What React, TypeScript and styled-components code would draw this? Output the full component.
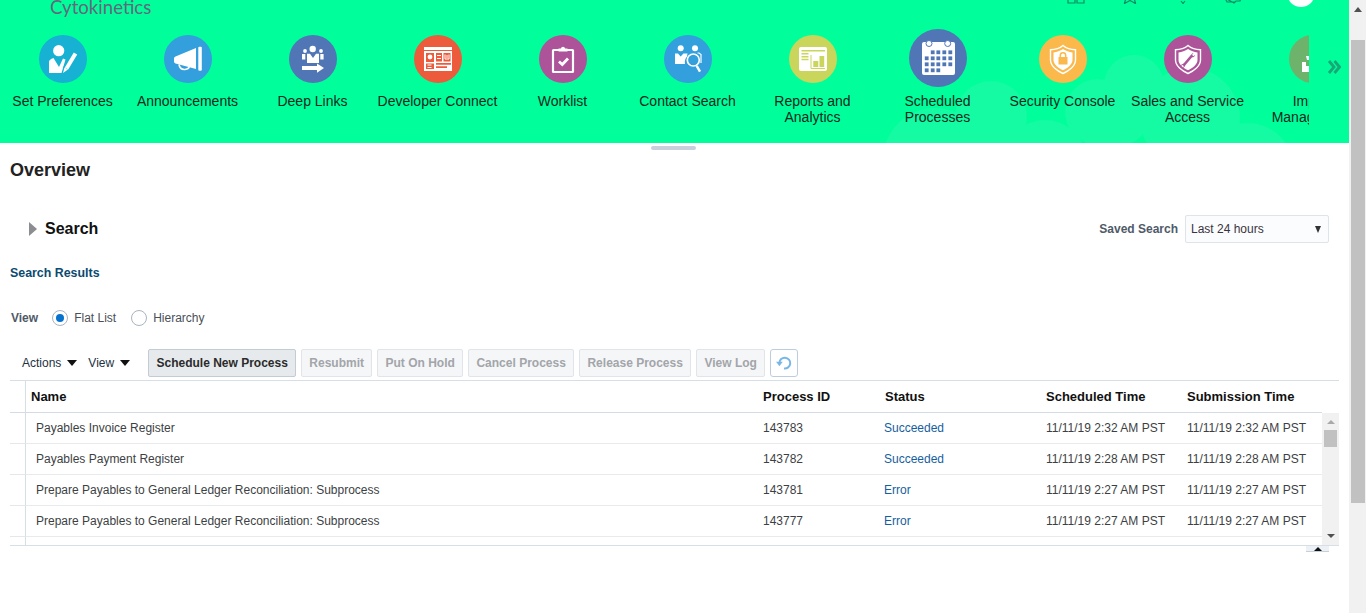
import React from "react";
import styled, { createGlobalStyle } from "styled-components";

const Global = createGlobalStyle`
  html, body { margin: 0; padding: 0; height: 100%; overflow: hidden; background: #fff; }
  body { font-family: "Liberation Sans", Arial, sans-serif; font-size: 12px; color: #333; }
  * { box-sizing: border-box; }
`;

const Page = styled.div`display: flex; width: 1366px; height: 613px; overflow: hidden;`;
const Main = styled.main`flex: 1; min-width: 0; display: flex; flex-direction: column;`;

const PageScroll = styled.aside`
  width: 17px; background: #f1f1f1; display: flex; flex-direction: column; align-items: center;
`;
const PageArrow = styled.div`
  width: 0; height: 0; margin-top: 7px; border-left: 4px solid transparent; border-right: 4px solid transparent;
  border-bottom: 5px solid #505050;
`;
const PageThumb = styled.div`width: 14px; height: 463px; margin-top: 28px; background: #c1c1c1;`;

const Header = styled.header`
  position: relative; height: 143px; background: #00ff9b; overflow: hidden; flex: none;
`;
const Clouds = styled.svg`position: absolute; left: 0; top: 0; width: 1349px; height: 143px;`;
const TopBar = styled.div`
  position: relative; height: 29px; display: flex; align-items: flex-start;
`;
const Logo = styled.div`
  margin: -5px 0 0 50px; font-family: Lato, sans-serif; font-size: 18.6px; line-height: 24px; color: #62697c;
`;
const TopTools = styled.div`
  margin: -14px 34px 0 auto; display: flex; align-items: flex-end;
`;
const ToolIcon = styled.svg<{ $gap: number }>`
  display: block; margin: 0 0 3px ${(p) => p.$gap}px; width: 18px; height: 18px;
  fill: none; stroke: #0f8a64; stroke-width: 1.2;
`;
const Avatar = styled.div`width: 28px; height: 21px; margin-left: 45px; border-radius: 0 0 14px 14px; background: #fff;`;

const NavRow = styled.div`position: relative; display: flex; align-items: flex-start;`;
const Carousel = styled.nav`display: flex; width: 1309px; overflow: hidden; flex: none;`;
const NavItem = styled.div`
  flex: 0 0 125px; display: flex; flex-direction: column; align-items: center;
`;
const IconSlot = styled.div`height: 58px; display: flex; align-items: center; justify-content: center;`;
const Circle = styled.svg<{ $size: number; $color: string }>`
  display: block; width: ${(p) => p.$size}px; height: ${(p) => p.$size}px; border-radius: 50%;
  margin-top: ${(p) => (p.$size === 48 ? 2 : 0)}px;
  background: ${(p) => p.$color}; flex: none;
`;
const NavLabel = styled.div`
  margin-top: 6px; width: 125px; text-align: center; font-size: 14px; line-height: 16px; color: #0c2a20;
`;
const LabelLine = styled.span`display: block; white-space: nowrap;`;
const More = styled.svg`
  display: block; width: 14px; height: 14px; margin: 31px 0 0 18px; fill: none; stroke: #17a877; stroke-width: 2.8;
`;

const Content = styled.div`flex: 1; padding: 0 10px; display: flex; flex-direction: column;`;
const Handle = styled.div`width: 45px; height: 4px; margin: 3px 0 0 641px; border-radius: 2px; background: #c9cfdd; flex: none;`;
const Title = styled.h1`margin: 10px 0 0; font-size: 18px; line-height: 20px; font-weight: 700; color: #222;`;
const SearchBar = styled.div`
  margin-top: 35px; height: 28px; padding: 0 10px 0 19px; display: flex; align-items: center;
`;
const Disclosure = styled.div`
  width: 0; height: 0; border-top: 7px solid transparent; border-bottom: 7px solid transparent;
  border-left: 8px solid #8b8d90;
`;
const SearchTitle = styled.h2`margin: 0 0 0 8px; font-size: 16px; font-weight: 700; color: #111;`;
const SavedLabel = styled.label`margin-left: auto; font-weight: 700; color: #4f5a68;`;
const SelectBox = styled.div`
  width: 144px; height: 28px; margin-left: 7px; padding: 0 6px 0 5px; display: flex; align-items: center;
  justify-content: space-between; border: 1px solid #dfe3ea; border-radius: 2px; background: #fbfcfe; color: #3a3340;
`;
const SelectArrow = styled.span`
  width: 0; height: 0; margin-right: 1px; border-left: 3.5px solid transparent; border-right: 3.5px solid transparent;
  border-top: 7px solid #333;
`;
const ResultsTitle = styled.h3`margin: 21px 0 0; font-size: 12.4px; line-height: 18px; font-weight: 700; color: #0b4a70;`;
const ViewRow = styled.div`margin-top: 27px; height: 18px; padding-left: 1px; display: flex; align-items: center;`;
const ViewLabel = styled.span`font-weight: 700; color: #4f5a68; margin-right: 14px;`;
const Radio = styled.span<{ $on?: boolean }>`
  width: 16px; height: 16px; border-radius: 50%; border: 1px solid #a9b4bf; background: #fff; flex: none;
  display: flex; align-items: center; justify-content: center;
  &::after { content: ""; width: 8px; height: 8px; border-radius: 50%; background: ${(p) => (p.$on ? "#0572ce" : "transparent")}; }
`;
const RadioText = styled.span`margin: 0 15px 0 6px; color: #4a4f58;`;

const Toolbar = styled.div`margin-top: 22px; height: 28px; padding-left: 12px; display: flex; align-items: center;`;
const MenuLabel = styled.span<{ $gap: number }>`
  color: #23313f; margin-right: ${(p) => p.$gap}px; display: flex; align-items: center;
`;
const Caret = styled.i`
  display: block; margin-left: 6px; width: 0; height: 0; border-left: 5px solid transparent; border-right: 5px solid transparent;
  border-top: 6px solid #111;
`;
const ToolButton = styled.button<{ $width: number; $primary?: boolean }>`
  width: ${(p) => p.$width}px; height: 28px; margin-right: 5px; padding: 0;
  font: 700 12px "Liberation Sans", Arial, sans-serif; border-radius: 2px;
  border: 1px solid ${(p) => (p.$primary ? "#c3ccd4" : "#e1e4e9")};
  background: ${(p) => (p.$primary ? "#e6eaed" : "#f5f6f8")};
  color: ${(p) => (p.$primary ? "#2b2b2b" : "#a2a5a9")};
`;
const RefreshButton = styled.button`
  width: 28px; height: 28px; padding: 0; display: flex; align-items: center; justify-content: center;
  border: 1px solid #bccde0; border-radius: 3px; background: #fff;
`;
const RefreshGlyph = styled.svg`width: 20px; height: 20px; fill: none; stroke: #78b6e6; stroke-width: 2.4;`;

const Table = styled.section`margin-top: 3px; border-top: 1px solid #d6dfe6; border-bottom: 1px solid #d6dfe6; height: 166px; display: flex; flex-direction: column; overflow: hidden;`;
const cols = "16px 731px 122px 161px 141px 141px 17px";
const HeadRow = styled.div`
  display: grid; grid-template-columns: ${cols}; height: 32px; flex: none; align-items: center;
`;
const HeadCell = styled.div<{ $pad: number }>`
  height: 100%; display: flex; align-items: center; padding-left: ${(p) => p.$pad}px;
  font-size: 13px; font-weight: 700; color: #111; border-bottom: 1px solid #d3dce4;
`;
const Gutter = styled.div<{ $head?: boolean }>`
  height: 100%; border-right: 1px solid #d6dfe6; border-bottom: 1px solid ${(p) => (p.$head ? "#d3dce4" : "#e4e8ec")};
`;
const Corner = styled.div`height: 100%;`;
const TableBody = styled.div`flex: 1; display: flex; min-height: 0;`;
const Rows = styled.div`width: 1312px; flex: none; overflow: hidden;`;
const Row = styled.div`
  display: grid; grid-template-columns: 16px 731px 122px 161px 141px 141px; height: 31px; align-items: center;
`;
const Cell = styled.div<{ $pad: number; $link?: boolean }>`
  height: 100%; display: flex; align-items: center; padding-left: ${(p) => p.$pad}px; white-space: nowrap;
  color: ${(p) => (p.$link ? "#165e9e" : "#3d3f44")}; border-bottom: 1px solid #e8ebee;
`;
const InnerScroll = styled.div`
  width: 17px; background: #f1f1f1; display: flex; flex-direction: column; align-items: center;
`;
const ArrowUp = styled.div`
  width: 0; height: 0; margin-top: 7px; border-left: 4px solid transparent; border-right: 4px solid transparent;
  border-bottom: 4px solid #a9a9a9;
`;
const InnerThumb = styled.div`width: 13px; height: 17px; margin-top: 6px; background: #c1c1c1;`;
const ArrowDown = styled.div`
  width: 0; height: 0; margin-top: auto; margin-bottom: 7px; border-left: 4px solid transparent; border-right: 4px solid transparent;
  border-top: 4px solid #505050;
`;
const ExpandRow = styled.div`display: flex; justify-content: flex-end; padding-right: 10px;`;
const ExpandTab = styled.div`
  width: 23px; height: 6px; background: #edf1f5; border-bottom: 1px solid #c5d0da; display: flex; justify-content: center; padding-top: 1px;
`;
const ExpandCaret = styled.i`
  display: block; width: 0; height: 0; border-left: 4px solid transparent; border-right: 4px solid transparent; border-bottom: 4px solid #111;
`;

const W = "#fff";
const colors = {
  pref: "#17b1d3", blue: "#339fdd", indigo: "#5176b6", red: "#ec5c3c", purple: "#ad5399",
  olive: "#c9d55b", amber: "#fbb84b", green: "#6eb36c",
};

const Shield: React.FC<{ children: React.ReactNode }> = ({ children }) => (
  <>
    <path d="M24 10.5C20.5 13.5 16 14.7 11.5 14.7V25C11.5 31 18 36 24 38.5 30 36 36.5 31 36.5 25V14.7C32 14.7 27.5 13.5 24 10.5Z" fill="none" stroke={W} strokeWidth="1.4" />
    <path d="M24 14C21 16 18 17.2 14.5 17.4V25C14.5 29.5 20 33.5 24 35.3 28 33.5 33.5 29.5 33.5 25V17.4C30 17.2 27 16 24 14Z" fill={W} />
    {children}
  </>
);

const glyphs: Record<string, React.ReactNode> = {
  pref: (
    <>
      <circle cx="19.7" cy="15.7" r="5.6" fill={W} />
      <path d="M10 38V27c0-2 1.5-3 4.5-4l5.5 9 4-8.500 2.500 1L22.500 38Z" fill={W} />
      <path d="M36.500 18.500 27 34.500" stroke={colors.pref} strokeWidth="7" />
      <path d="M36.500 18.500 27.500 33.500" stroke={W} strokeWidth="4" />
      <path d="M25.500 32.500l3.500 2-5 3.500Z" fill={W} />
    </>
  ),
  announce: (
    <>
      <path d="M10 23.500q0-1.500 1.500-2L32 13v21L11.500 28.500Q10 28 10 26.500Z" fill={W} />
      <rect x="34.300" y="11.700" width="3.500" height="24" rx="1" fill={W} />
      <path d="M15 29.500q1 5.500 6 5 3.800-.3 4.200-2.800" fill="none" stroke={W} strokeWidth="1.600" />
    </>
  ),
  deep: (
    <>
      <circle cx="23.700" cy="14" r="3.200" fill={W} />
      <circle cx="16" cy="16" r="1.900" fill={W} />
      <circle cx="32" cy="16" r="1.900" fill={W} />
      <path d="M18 18.800h3l3 4.200 3-4.200h3V28H18Z" fill={W} />
      <rect x="13" y="19" width="3.300" height="5.500" fill={W} />
      <rect x="31.300" y="19" width="3.300" height="5.500" fill={W} />
      <path d="M13 31h15v-2.500l7 4.600-7 4.600V35H13Z" fill={W} />
    </>
  ),
  dev: (
    <>
      <rect x="10" y="12" width="28" height="3" fill={W} />
      <rect x="10" y="16" width="28" height="20" fill={W} />
      <rect x="12" y="18" width="8" height="9" fill={colors.red} />
      <circle cx="16" cy="22" r="2.400" fill={W} />
      <rect x="22" y="18" width="6" height="8.500" fill={colors.red} />
      <path d="M23 20.500h4M23 23.500h4" stroke={W} strokeWidth="1.200" />
      <rect x="29.500" y="18" width="7" height="8.500" fill={colors.red} />
      <path d="M31 19.500v4.500h4v-4.500M33 20v3" stroke={W} strokeWidth="1" fill="none" />
      <rect x="12" y="28.500" width="8" height="5.500" fill={colors.red} />
      <path d="M13.500 30h4M13.500 32.500h4" stroke={W} strokeWidth="1" />
      <path d="M22 28.800h15M22 32.200h11" stroke={colors.red} strokeWidth="1.700" />
    </>
  ),
  work: (
    <>
      <rect x="14" y="15" width="20" height="22" fill="none" stroke={W} strokeWidth="2.200" rx=".5" />
      <path d="M19.500 16.500v-3h2.300a2.300 2.300 0 0 1 4.400 0h2.300v3Z" fill={W} />
      <path d="M20 26.500l3.300 3 5.700-6" fill="none" stroke={W} strokeWidth="2.800" />
    </>
  ),
  contact: (
    <>
      <circle cx="16.700" cy="13.300" r="3" fill={W} />
      <circle cx="31" cy="13.300" r="3" fill={W} />
      <path d="M11 18.500h3l2.700 3 2.700-3h4.100l-.5 3a9 9 0 0 0-2 7.500H11Z" fill={W} />
      <path d="M33.500 18h1.500l2 1.500V28" fill="none" stroke={W} strokeWidth="1.200" />
      <circle cx="29.300" cy="25" r="6" fill="none" stroke={W} strokeWidth="1.700" />
      <path d="M32.700 30.800 36 36.700" stroke={W} strokeWidth="2.400" />
    </>
  ),
  report: (
    <>
      <rect x="10" y="12" width="28" height="24" rx="2" fill={W} />
      <path d="M12.500 15.800H36M12.500 18.800h7M12.500 21.800h7M12.500 24.500h7" stroke={colors.olive} strokeWidth="1.500" />
      <path d="M22 20v13.500h14" fill="none" stroke={colors.olive} strokeWidth="1" />
      <rect x="24.300" y="26" width="5" height="6" fill={colors.olive} />
      <rect x="30.500" y="21" width="4.700" height="11" fill={colors.olive} />
    </>
  ),
  sched: (
    <>
      <rect x="13" y="13" width="33" height="33" rx="2" fill={W} />
      <circle cx="20" cy="14.500" r="3" fill={W} stroke={colors.indigo} strokeWidth="1" />
      <circle cx="38.700" cy="14.500" r="3" fill={W} stroke={colors.indigo} strokeWidth="1" />
      {[23.3, 29.3, 35.3, 41.3].map((y, r) =>
        [17.7, 23.7, 29.3, 35.3, 41.3].map((x, c) =>
          (r === 0 && c === 0) || (r === 3 && c > 2) ? null : (
            <rect key={`${r}-${c}`} x={x - 1.9} y={y - 1.9} width="3.800" height="3.800" fill={colors.indigo} />
          ),
        ),
      )}
    </>
  ),
  security: (
    <Shield>
      <rect x="19.500" y="22" width="9" height="7.500" fill={colors.amber} />
      <path d="M21.300 22.500v-2a2.700 2.700 0 0 1 5.400 0v2" fill="none" stroke={colors.amber} strokeWidth="1.500" />
    </Shield>
  ),
  sales: (
    <Shield>
      <path d="M19.500 30.500 28 20.500" stroke={colors.purple} strokeWidth="2.600" />
      <path d="M27 22a3 3 0 0 1 2.500-4l-1.500 2 1.500 1.300 1.800-1.500a3 3 0 0 1-4.300 2.200ZM21 29a3 3 0 0 1-2.500 4l1.500-2-1.500-1.300-1.700 1.500a3 3 0 0 1 4.200-2.200Z" fill={colors.purple} />
    </Shield>
  ),
  imports: (
    <>
      <path d="M13 27h4v4h3v6h-7Z" fill={W} />
      <path d="M17 21h3v4h-2Z" fill={W} />
    </>
  ),
};

const nav = [
  { key: "pref", color: colors.pref, label: ["Set Preferences"] },
  { key: "announce", color: colors.blue, label: ["Announcements"] },
  { key: "deep", color: colors.indigo, label: ["Deep Links"] },
  { key: "dev", color: colors.red, label: ["Developer Connect"] },
  { key: "work", color: colors.purple, label: ["Worklist"] },
  { key: "contact", color: colors.blue, label: ["Contact Search"] },
  { key: "report", color: colors.olive, label: ["Reports and", "Analytics"] },
  { key: "sched", color: colors.indigo, label: ["Scheduled", "Processes"], size: 58 },
  { key: "security", color: colors.amber, label: ["Security Console"] },
  { key: "sales", color: colors.purple, label: ["Sales and Service", "Access"] },
  { key: "imports", color: colors.green, label: ["Import", "Management"] },
];

const rows = [
  ["Payables Invoice Register", "143783", "Succeeded", "11/11/19 2:32 AM PST", "11/11/19 2:32 AM PST"],
  ["Payables Payment Register", "143782", "Succeeded", "11/11/19 2:28 AM PST", "11/11/19 2:28 AM PST"],
  ["Prepare Payables to General Ledger Reconciliation: Subprocess", "143781", "Error", "11/11/19 2:27 AM PST", "11/11/19 2:27 AM PST"],
  ["Prepare Payables to General Ledger Reconciliation: Subprocess", "143777", "Error", "11/11/19 2:27 AM PST", "11/11/19 2:27 AM PST"],
];

const buttons: [string, number][] = [
  ["Resubmit", 71], ["Put On Hold", 86], ["Cancel Process", 106], ["Release Process", 112], ["View Log", 69],
];

export default function App() {
  return (
    <Page>
      <Global />
      <Main>
        <Header>
          <Clouds viewBox="0 0 1349 143" aria-hidden="true">
            <g fill="#14fba3">
              <circle cx="935" cy="160" r="52" />
              <circle cx="991" cy="117" r="36" />
              <circle cx="1045" cy="162" r="42" />
              <circle cx="1098" cy="112" r="33" />
              <circle cx="1120" cy="115" r="30" />
              <circle cx="1134" cy="85" r="30" />
              <circle cx="1190" cy="118" r="50" />
              <circle cx="1248" cy="168" r="45" />
            </g>
          </Clouds>
          <TopBar>
            <Logo>Cytokinetics</Logo>
            <TopTools>
              <ToolIcon $gap={0} viewBox="0 0 18 18"><path d="M1 4h7v13H1ZM10 4h7v13h-7Z" /></ToolIcon>
              <ToolIcon $gap={36} viewBox="0 0 18 18"><path d="M9 1l2.500 6 6 .5-4.500 4 1.500 6L9 14.500 3.500 17.500 5 11.500.5 7.500l6-.5Z" /></ToolIcon>
              <ToolIcon $gap={35} viewBox="0 0 18 18"><path d="M9 1v12M7 15l2 2.500 2-2.500" /></ToolIcon>
              <ToolIcon $gap={32} viewBox="0 0 18 18"><path d="M1 12l9 5 2-2h4l1-3M1 12l2 4h8" /></ToolIcon>
              <Avatar />
            </TopTools>
          </TopBar>
          <NavRow>
            <Carousel>
              {nav.map((n) => (
                <NavItem key={n.key}>
                  <IconSlot>
                    <Circle $size={n.size ?? 48} $color={n.color} viewBox={`0 0 ${n.size ?? 48} ${n.size ?? 48}`}>
                      {glyphs[n.key]}
                    </Circle>
                  </IconSlot>
                  <NavLabel>
                    {n.label.map((l) => <LabelLine key={l}>{l}</LabelLine>)}
                  </NavLabel>
                </NavItem>
              ))}
            </Carousel>
            <More viewBox="0 0 14 14"><path d="M2 1l5 6-5 6M7.500 1l5 6-5 6" /></More>
          </NavRow>
        </Header>
        <Content>
          <Handle />
          <Title>Overview</Title>
          <SearchBar>
            <Disclosure />
            <SearchTitle>Search</SearchTitle>
            <SavedLabel>Saved Search</SavedLabel>
            <SelectBox>Last 24 hours<SelectArrow /></SelectBox>
          </SearchBar>
          <ResultsTitle>Search Results</ResultsTitle>
          <ViewRow>
            <ViewLabel>View</ViewLabel>
            <Radio $on />
            <RadioText>Flat List</RadioText>
            <Radio />
            <RadioText>Hierarchy</RadioText>
          </ViewRow>
          <Toolbar>
            <MenuLabel $gap={11}>Actions<Caret /></MenuLabel>
            <MenuLabel $gap={18}>View<Caret /></MenuLabel>
            <ToolButton $width={148} $primary>Schedule New Process</ToolButton>
            {buttons.map(([t, w]) => <ToolButton key={t} $width={w}>{t}</ToolButton>)}
            <RefreshButton aria-label="Refresh">
              <RefreshGlyph viewBox="0 0 24 24">
                <path d="M6.500 12A6.500 6.500 0 1 1 12 18.500" />
                <path d="M2.500 10.500h8l-4 5.500Z" fill="#78b6e6" stroke="none" />
              </RefreshGlyph>
            </RefreshButton>
          </Toolbar>
          <Table>
            <HeadRow>
              <Gutter $head />
              <HeadCell $pad={5}>Name</HeadCell>
              <HeadCell $pad={6}>Process ID</HeadCell>
              <HeadCell $pad={6}>Status</HeadCell>
              <HeadCell $pad={6}>Scheduled Time</HeadCell>
              <HeadCell $pad={6}>Submission Time</HeadCell>
              <Corner />
            </HeadRow>
            <TableBody>
              <Rows>
                {rows.map((r) => (
                  <Row key={r[1]}>
                    <Gutter />
                    <Cell $pad={10}>{r[0]}</Cell>
                    <Cell $pad={6}>{r[1]}</Cell>
                    <Cell $pad={5} $link>{r[2]}</Cell>
                    <Cell $pad={6}>{r[3]}</Cell>
                    <Cell $pad={6}>{r[4]}</Cell>
                  </Row>
                ))}
                <Row><Gutter /></Row>
              </Rows>
              <InnerScroll>
                <ArrowUp />
                <InnerThumb />
                <ArrowDown />
              </InnerScroll>
            </TableBody>
          </Table>
          <ExpandRow>
            <ExpandTab><ExpandCaret /></ExpandTab>
          </ExpandRow>
        </Content>
      </Main>
      <PageScroll>
        <PageArrow />
        <PageThumb />
      </PageScroll>
    </Page>
  );
}
